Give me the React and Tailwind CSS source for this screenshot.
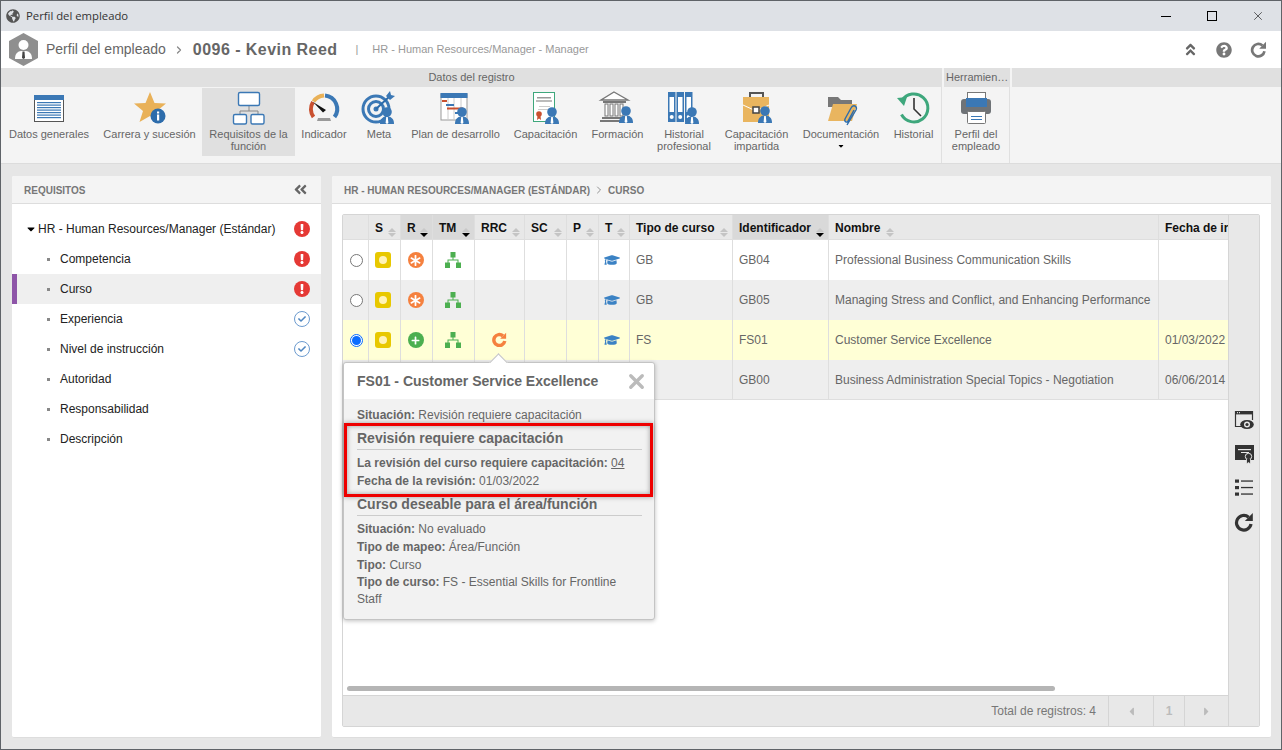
import React from 'react'
import { FaGlobeAmericas, FaQuestionCircle, FaAngleDoubleUp, FaAngleDoubleLeft, FaGraduationCap, FaCaretDown, FaCaretLeft, FaCaretRight, FaExclamation, FaCheck, FaPlus, FaAsterisk } from 'react-icons/fa'
import { ChevronRight, X } from 'lucide-react'

function Person({ x = 0, y = 0 }) {
  return (
    <g transform={`translate(${x} ${y})`}>
      <circle cx="7" cy="5" r="4.8" fill="#3b78b5" />
      <path d="M0 17 C0 11.5 3 10 5.5 9.5 L8.5 9.5 C11 10 14 11.5 14 17 Z" fill="#3b78b5" />
      <path d="M6.2 10 L7.8 10 L8.4 16 L7 17 L5.6 16 Z" fill="#fff" />
    </g>
  )
}

function RedoIcon({ size = 16, weight = 3.2, className = '' }) {
  return (
    <svg width={size} height={size} viewBox="0 0 20 20" fill="none" className={className}>
      <path d="M14.6 5.2 A7.3 7.3 0 1 0 17 12" stroke="currentColor" strokeWidth={weight} />
      <path d="M18.8 1 V9 H10.8 Z" fill="currentColor" />
    </svg>
  )
}

function TreeIcon() {
  return (
    <svg width="16" height="16" viewBox="0 0 16 16" fill="#4caf50">
      <rect x="5.5" y="0" width="5" height="5.5" />
      <rect x="0" y="10.5" width="5" height="5.5" />
      <rect x="11" y="10.5" width="5" height="5.5" />
      <path d="M7.5 5 H8.5 V7.5 H13.5 V11 H12.5 V8.5 H3.5 V11 H2.5 V7.5 H7.5 Z" />
    </svg>
  )
}

function IconDatos() {
  return (
    <svg width="40" height="38" viewBox="0 0 40 38">
      <rect x="5.5" y="5.5" width="29" height="26" fill="#fff" stroke="#555" />
      <rect x="5" y="5" width="30" height="5" fill="#3b78b5" />
      {[12, 14.5, 17, 19.5, 22, 24.5, 27].map(y => <rect key={y} x="8" y={y} width="24" height="1.2" fill="#3b78b5" />)}
    </svg>
  )
}

function IconStar() {
  return (
    <svg width="40" height="38" viewBox="0 0 40 38">
      <path d="M20 2 L24.5 13 L36 13.5 L27 21 L30.5 32 L20 26 L9.5 32 L13 21 L4 13.5 L15.5 13 Z" fill="#e9b158" />
      <circle cx="28" cy="26" r="7.5" fill="#2d6cab" />
      <rect x="27" y="24.5" width="2.2" height="6" fill="#fff" />
      <rect x="27" y="21.5" width="2.2" height="2" fill="#fff" />
    </svg>
  )
}

function IconRequisitos() {
  return (
    <svg width="40" height="38" viewBox="0 0 40 38" fill="none">
      <path d="M20 16 V21 M11 24 V21 H29 V24" stroke="#888" />
      <rect x="9.5" y="2.5" width="21" height="13" rx="1.5" fill="#fff" stroke="#3b78b5" strokeWidth="1.4" />
      <rect x="4.5" y="24.5" width="13" height="9.5" rx="1.5" fill="#fff" stroke="#3b78b5" strokeWidth="1.4" />
      <rect x="22" y="24.5" width="13" height="9.5" rx="1.5" fill="#fff" stroke="#3b78b5" strokeWidth="1.4" />
    </svg>
  )
}

function IconIndicador() {
  return (
    <svg width="40" height="38" viewBox="0 0 40 38" fill="none">
      <path d="M9.5 27 A13.5 13.5 0 0 1 9 12" stroke="#c9502f" strokeWidth="4" />
      <path d="M9.5 11.5 A13.5 13.5 0 0 1 20 5.5" stroke="#e9b158" strokeWidth="4" />
      <path d="M21 5.5 A13.5 13.5 0 0 1 30.5 27" stroke="#3b78b5" strokeWidth="4" />
      <path d="M9 12 L22 20 L19 22.5 Z" fill="#111" />
      <path d="M14 28 H26 L27 31 H13 Z" fill="#999" />
    </svg>
  )
}

function IconMeta() {
  return (
    <svg width="40" height="38" viewBox="0 0 40 38" fill="none">
      <circle cx="17" cy="19" r="13" stroke="#3b78b5" strokeWidth="3" />
      <circle cx="17" cy="19" r="7.5" stroke="#3b78b5" strokeWidth="3" />
      <circle cx="17" cy="19" r="2.5" fill="#3b78b5" />
      <path d="M17 19 L31 6" stroke="#2d6cab" strokeWidth="2" />
      <path d="M27 6 L31 1 L32 5 L36 6 L31 10 Z" fill="#3b78b5" />
      <Person x="21" y="17" />
    </svg>
  )
}

function IconPlan() {
  return (
    <svg width="40" height="38" viewBox="0 0 40 38">
      <rect x="5" y="4" width="26" height="26" fill="#fff" stroke="#999" />
      <rect x="4.5" y="3" width="27" height="5" fill="#3b78b5" />
      <path d="M12 8 V30 M18 8 V30 M25 8 V30" stroke="#ccc" />
      <rect x="6" y="10" width="5" height="2" fill="#c9502f" />
      <rect x="10" y="14" width="8" height="2" fill="#3b78b5" />
      <rect x="11" y="17.5" width="16" height="2" fill="#c9502f" />
      <rect x="19" y="22" width="6" height="2" fill="#3b78b5" />
      <Person x="19" y="17" />
    </svg>
  )
}

function IconCertificado() {
  return (
    <svg width="40" height="38" viewBox="0 0 40 38">
      <rect x="7.5" y="2.5" width="21" height="29" fill="#fff" stroke="#3ea77c" />
      <rect x="11" y="7" width="14" height="1.5" fill="#999" />
      <rect x="10" y="10" width="16" height="2" fill="#bbb" />
      <rect x="13" y="16" width="11" height="1" fill="#ccc" />
      <rect x="12" y="19" width="12" height="1" fill="#ccc" />
      <circle cx="13" cy="24" r="2.8" fill="#c9502f" />
      <path d="M11.5 26 L11 30 L13 28.5 L15 30 L14.5 26 Z" fill="#c9502f" />
      <Person x="19" y="17" />
    </svg>
  )
}

function IconBanco() {
  return (
    <svg width="40" height="38" viewBox="0 0 40 38" fill="none">
      <path d="M16 2 L30 10 H3 Z" stroke="#777" strokeWidth="1.4" fill="#fff" />
      <rect x="5" y="11" width="23" height="2" fill="#777" />
      {[7, 12, 17, 22].map(x => <rect key={x} x={x} y="14" width="3" height="12" fill="#fff" stroke="#777" />)}
      <rect x="4" y="27" width="24" height="2" fill="#777" />
      <rect x="2" y="30" width="27" height="2" fill="#777" />
      <Person x="21" y="16" />
    </svg>
  )
}

function IconCarpetas() {
  return (
    <svg width="40" height="38" viewBox="0 0 40 38">
      {[4, 12.5, 21].map(x => (
        <g key={x}>
          <rect x={x} y="2" width="7.5" height="30" fill="#3b78b5" />
          <rect x={x + 1.5} y="7" width="4.5" height="15" fill="#fff" />
          <circle cx={x + 3.7} cy="27" r="2" fill="#fff" />
        </g>
      ))}
      <Person x="21" y="17" />
    </svg>
  )
}

function IconMaletin() {
  return (
    <svg width="40" height="38" viewBox="0 0 40 38">
      <path d="M13 7 V3 H26 V7" fill="none" stroke="#555" strokeWidth="2" />
      <rect x="6" y="7" width="26" height="25" fill="#e9b55f" />
      <path d="M6 15 L19 21 L32 15" stroke="#fff" strokeWidth="1" fill="none" />
      <rect x="16" y="17" width="6" height="6" fill="#fff" stroke="#444" strokeWidth="1.5" />
      <Person x="21" y="16" />
    </svg>
  )
}

function IconFolder() {
  return (
    <svg width="40" height="38" viewBox="0 0 40 38" fill="none">
      <path d="M7 31 V7 H17 L20 10 H31 V17 H7" fill="#777" />
      <path d="M7 31 L12 14 H36 L31 31 Z" fill="#e9b55f" />
      <path d="M26 35 L35 20 C37 16 32 14 30 18 L24 29 C23 32 26 33 27 31 L33 20" stroke="#2d6cab" strokeWidth="1.4" />
    </svg>
  )
}

function IconHistorial() {
  return (
    <svg width="40" height="38" viewBox="0 0 40 38" fill="none">
      <path d="M8 10.5 A14 14 0 1 1 7.5 24.5" stroke="#3ea77c" strokeWidth="3" />
      <path d="M3 8 L13 7 L10 16 Z" fill="#3ea77c" />
      <path d="M20 8 V19 L27 26" stroke="#333" strokeWidth="1.6" />
    </svg>
  )
}

function IconPrinter() {
  return (
    <svg width="40" height="38" viewBox="0 0 40 38">
      <rect x="11.5" y="2.5" width="18" height="8" fill="#fff" stroke="#777" />
      <rect x="5" y="9" width="30" height="15" rx="3" fill="#6f7377" />
      <rect x="10" y="8" width="21" height="9" fill="#3b78b5" />
      <rect x="11.5" y="21.5" width="18" height="12" rx="1" fill="#fff" stroke="#777" />
      <rect x="15" y="26" width="11" height="1" fill="#3b78b5" />
      <rect x="15" y="29" width="11" height="1" fill="#3b78b5" />
    </svg>
  )
}

const ribbon = [
  { w: 'w-[96px]', lines: ['Datos generales'], icon: IconDatos },
  { w: 'w-[105px]', lines: ['Carrera y sucesión'], icon: IconStar },
  { w: 'w-[93px]', lines: ['Requisitos de la', 'función'], icon: IconRequisitos, active: true },
  { w: 'w-[58px]', lines: ['Indicador'], icon: IconIndicador },
  { w: 'w-[52px]', lines: ['Meta'], icon: IconMeta },
  { w: 'w-[101px]', lines: ['Plan de desarrollo'], icon: IconPlan },
  { w: 'w-[79px]', lines: ['Capacitación'], icon: IconCertificado },
  { w: 'w-[65px]', lines: ['Formación'], icon: IconBanco },
  { w: 'w-[68px]', lines: ['Historial', 'profesional'], icon: IconCarpetas },
  { w: 'w-[77px]', lines: ['Capacitación', 'impartida'], icon: IconMaletin },
  { w: 'w-[92px]', lines: ['Documentación'], icon: IconFolder, caret: true },
  { w: 'w-[53px]', lines: ['Historial'], icon: IconHistorial },
]

function RibbonItem({ item }) {
  const Icon = item.icon
  return (
    <div className={`${item.w} shrink-0 h-[68px] mt-px flex flex-col items-center pt-[2px] text-[11px] leading-[12px] text-[#666] text-center ${item.active ? 'bg-[#e0e0e0]' : ''}`}>
      <div className="h-[38px] flex items-center justify-center"><Icon /></div>
      {item.lines.map(l => <div key={l} className="whitespace-nowrap">{l}</div>)}
      {item.caret && <FaCaretDown size={8} className="text-black mt-[2px]" />}
    </div>
  )
}

const treeItems = [
  { label: 'Competencia', status: 'err' },
  { label: 'Curso', status: 'err', active: true },
  { label: 'Experiencia', status: 'ok' },
  { label: 'Nivel de instrucción', status: 'ok' },
  { label: 'Autoridad' },
  { label: 'Responsabilidad' },
  { label: 'Descripción' },
]

function StatusIcon({ status }) {
  if (status === 'err') return (
    <span className="w-4 h-4 rounded-full bg-[#e53935] flex items-center justify-center text-white"><FaExclamation size={10} /></span>
  )
  if (status === 'ok') return (
    <span className="w-4 h-4 rounded-full border border-[#6c9bcf] flex items-center justify-center text-[#4f86c0]"><FaCheck size={8} /></span>
  )
  return null
}

function Sidebar() {
  return (
    <div className="w-[309px] shrink-0 bg-white rounded-[2px] border-b border-[#ddd] flex flex-col">
      <div className="h-[28px] shrink-0 bg-[#f4f4f4] border-b border-[#ddd] rounded-t-[2px] flex items-center justify-between pl-3 pr-[13px]">
        <span className="text-[10px] font-bold pt-[2px] text-[#777]">REQUISITOS</span>
        <FaAngleDoubleLeft size={15} className="text-[#666]" />
      </div>
      <div className="pt-[10px]">
        <div className="h-[30px] flex items-center pl-[12px] pr-[11px] text-[12px] text-[#222]">
          <FaCaretDown size={12} className="text-black w-[14px] shrink-0" />
          <span className="flex-1">HR - Human Resources/Manager (Estándar)</span>
          <StatusIcon status="err" />
        </div>
        {treeItems.map(t => (
          <div key={t.label} className={`h-[30px] flex items-center pr-[11px] text-[12px] text-[#222] ${t.active ? 'bg-[#efefef] border-l-[5px] border-[#8e55a8] pl-[30px]' : 'pl-[35px]'}`}>
            <span className="w-[3px] h-[3px] bg-[#888] mr-[10px] shrink-0" />
            <span className="flex-1">{t.label}</span>
            <StatusIcon status={t.status} />
          </div>
        ))}
      </div>
    </div>
  )
}

function SortIcon({ active }) {
  return (
    <span className="inline-flex flex-col items-center shrink-0">
      <span className={`w-0 h-0 border-x-[4px] border-x-transparent border-b-[4px] ${active ? 'border-b-[#c8c8c8]' : 'border-b-[#c4c4c4]'}`} />
      <span className={`w-0 h-0 mt-[1px] border-x-[4px] border-x-transparent border-t-[4px] ${active ? 'border-t-black' : 'border-t-[#c4c4c4]'}`} />
    </span>
  )
}

const columns = [
  { label: '', w: 'w-[26px]' },
  { label: 'S', w: 'w-[32px]' },
  { label: 'R', w: 'w-[32px]', active: true },
  { label: 'TM', w: 'w-[42px]', active: true },
  { label: 'RRC', w: 'w-[50px]' },
  { label: 'SC', w: 'w-[42px]' },
  { label: 'P', w: 'w-[32px]' },
  { label: 'T', w: 'w-[31px]' },
  { label: 'Tipo de curso', w: 'w-[103px]' },
  { label: 'Identificador', w: 'w-[96px]', active: true },
  { label: 'Nombre', w: 'w-[330px]', inline: true },
  { label: 'Fecha de inicio', w: 'w-[100px]', last: true },
]

const rows = [
  { tipo: 'GB', id: 'GB04', name: 'Professional Business Communication Skills', date: '', r: 'star', bg: 'bg-white' },
  { tipo: 'GB', id: 'GB05', name: 'Managing Stress and Conflict, and Enhancing Performance', date: '', r: 'star', bg: 'bg-[#eeeeee]' },
  { tipo: 'FS', id: 'FS01', name: 'Customer Service Excellence', date: '01/03/2022', r: 'plus', rrc: true, selected: true, bg: 'bg-[#ffffd6]' },
  { tipo: 'GB', id: 'GB00', name: 'Business Administration Special Topics - Negotiation', date: '06/06/2014', r: 'plus', bg: 'bg-[#eeeeee]', bottom: true },
]

function Cell({ w, children, className = '', last }) {
  return <div className={`${w} shrink-0 h-full flex items-center ${last ? '' : 'border-r border-[#dedede]'} ${className}`}>{children}</div>
}

function Grid() {
  return (
    <div className="flex-1 min-w-0 flex flex-col">
      <div className="flex-1 relative flex flex-col min-h-0">
        <div className="overflow-hidden">
          <div className="flex h-[25px] w-[920px] bg-[#e8e8e8] border-b border-[#dedede]">
            {columns.map(c => (
              <div key={c.label || 'radio'} className={`${c.w} shrink-0 flex items-center pl-[6px] pt-[1px] text-[12px] font-bold text-[#111] whitespace-nowrap overflow-hidden ${c.last ? '' : 'border-r border-[#dedede]'} ${c.active ? 'bg-[#d9d9d9]' : ''}`}>
                {c.label}
                {c.label && !c.last && (c.inline
                  ? <span className="ml-[6px]"><SortIcon active={c.active} /></span>
                  : <span className="ml-auto mr-[4px]"><SortIcon active={c.active} /></span>)}
              </div>
            ))}
          </div>
          {rows.map(r => (
            <div key={r.id} className={`flex h-[40px] w-[920px] text-[12px] text-[#666] ${r.bg} ${r.bottom ? 'border-b border-[#dedede]' : ''}`}>
              <Cell w="w-[26px]" className="justify-center pl-[2px]">
                <span className={`w-[13px] h-[13px] rounded-full border ${r.selected ? 'border-[#0a6cff] flex items-center justify-center bg-white' : 'border-[#777] bg-white'}`}>
                  {r.selected && <span className="w-[9px] h-[9px] rounded-full bg-[#0a6cff]" />}
                </span>
              </Cell>
              <Cell w="w-[32px]" className="justify-center pr-[3px]">
                <span className="w-4 h-4 rounded-[3px] bg-[#e8c800] flex items-center justify-center"><span className="w-[8px] h-[8px] rounded-full bg-[#fff3b8]" /></span>
              </Cell>
              <Cell w="w-[32px]" className="justify-center pr-[2px]">
                {r.r === 'star'
                  ? <span className="w-4 h-4 rounded-full bg-[#f5813f] flex items-center justify-center text-white"><FaAsterisk size={11} /></span>
                  : <span className="w-4 h-4 rounded-full bg-[#4caf50] flex items-center justify-center text-white"><FaPlus size={9} /></span>}
              </Cell>
              <Cell w="w-[42px]" className="justify-center pr-[2px]"><TreeIcon /></Cell>
              <Cell w="w-[50px]" className="justify-center pb-[1px] text-[#f5813f]">{r.rrc && <RedoIcon size={15} weight={4.6} />}</Cell>
              <Cell w="w-[42px]" />
              <Cell w="w-[32px]" />
              <Cell w="w-[31px]" className="justify-center pr-[4px] text-[#3b82c4]"><FaGraduationCap size={16} /></Cell>
              <Cell w="w-[103px]" className="pl-[6px]">{r.tipo}</Cell>
              <Cell w="w-[96px]" className="pl-[6px]">{r.id}</Cell>
              <Cell w="w-[330px]" className="pl-[6px] whitespace-nowrap">{r.name}</Cell>
              <Cell w="w-[100px]" className="pl-[6px]" last>{r.date}</Cell>
            </div>
          ))}
        </div>
        <div className="mt-auto mb-[4px] ml-[4px] w-[708px] h-[5px] rounded-full bg-[#b5b5b5]" />
        <Popover />
      </div>
      <div className="h-[31px] shrink-0 bg-[#e8e8e8] border-t border-[#d5d5d5] flex justify-end text-[12px] text-[#777]">
        <div className="flex items-center pr-3">Total de registros: 4</div>
        <div className="w-[45px] border-l border-[#d5d5d5] flex items-center justify-center text-[#bbb]"><FaCaretLeft size={13} /></div>
        <div className="w-[31px] border-l border-[#d5d5d5] flex items-center justify-center text-[#bbb] font-bold">1</div>
        <div className="w-[44px] border-l border-[#d5d5d5] flex items-center justify-center text-[#bbb]"><FaCaretRight size={13} /></div>
      </div>
    </div>
  )
}

function Bold({ children }) {
  return <span className="font-bold">{children}</span>
}

function Popover() {
  return (
    <div className="absolute left-0 top-[147px] w-[312px] h-[258px] bg-[#f2f2f2] border border-[#c4c4c4] rounded-[3px] shadow-[0_1px_4px_rgba(0,0,0,0.25)] text-[12px] leading-[18px] text-[#666] z-10">
      <div className="absolute -top-[7px] left-[148px] w-[13px] h-[13px] rotate-45 bg-white border-l border-t border-[#c4c4c4]" />
      <div className="relative h-[36px] bg-white rounded-t-[3px] flex items-center justify-between pl-[13px] pr-[6px]">
        <span className="text-[14px] font-bold text-[#666]">FS01 - Customer Service Excellence</span>
        <X size={23} strokeWidth={3.5} className="text-[#bbb]" />
      </div>
      <div className="pl-[13px] pr-[12px] pt-[7px]">
        <div className="h-[18px]"><Bold>Situación:</Bold> Revisión requiere capacitación</div>
        <div className="mt-[5px] pb-[2px] border-b border-[#ccc] text-[14px] leading-[18px] font-bold">Revisión requiere capacitación</div>
        <div className="mt-[5px] leading-[17px]"><Bold>La revisión del curso requiere capacitación:</Bold> <span className="underline">04</span></div>
        <div><Bold>Fecha de la revisión:</Bold> 01/03/2022</div>
        <div className="mt-[5px] pb-[2px] border-b border-[#ccc] text-[14px] leading-[18px] font-bold">Curso deseable para el área/función</div>
        <div className="mt-[4px]"><Bold>Situación:</Bold> No evaluado</div>
        <div><Bold>Tipo de mapeo:</Bold> Área/Función</div>
        <div><Bold>Tipo:</Bold> Curso</div>
        <div className="leading-[17px]"><Bold>Tipo de curso:</Bold> FS - Essential Skills for Frontline Staff</div>
      </div>
      <div className="absolute left-0 top-[60px] w-[309px] h-[74px] border-[3px] border-[#ee0000] shadow-[0_0_5px_rgba(0,0,0,0.35),inset_0_0_5px_rgba(0,0,0,0.35)]" />
    </div>
  )
}

function SideToolbar() {
  return (
    <div className="w-[31px] shrink-0 bg-[#e8e8e8] border-l border-[#d5d5d5] flex flex-col items-center pt-[195px] gap-[14px] text-[#333]">
      <svg width="20" height="20" viewBox="0 0 20 20" className="shrink-0">
        <path d="M8 16.5 H1.5 V1.5 H18.5 V10" fill="none" stroke="#333" strokeWidth="1.2" />
        <rect x="1" y="1" width="18" height="3.4" fill="#333" />
        <rect x="3" y="2.2" width="1" height="1" fill="#fff" />
        <rect x="5" y="2.2" width="1" height="1" fill="#fff" />
        <ellipse cx="13" cy="14.5" rx="6.8" ry="4.6" fill="#333" />
        <circle cx="13" cy="14.5" r="3" fill="#e8e8e8" />
        <circle cx="13" cy="14.5" r="1.6" fill="#333" />
      </svg>
      <svg width="20" height="20" viewBox="0 0 20 20" className="shrink-0">
        <rect x="1" y="1" width="19" height="15" fill="#333" />
        <rect x="4" y="5" width="13" height="1.2" fill="#e8e8e8" />
        <rect x="7" y="8" width="8" height="1" fill="#e8e8e8" />
        <circle cx="14.5" cy="12.5" r="3.2" fill="#333" stroke="#e8e8e8" />
        <path d="M12.5 15 V20 L14.5 18.5 L16.5 20 V15" fill="#333" stroke="#e8e8e8" strokeWidth="0.8" />
      </svg>
      <svg width="20" height="20" viewBox="0 0 20 20" className="shrink-0">
        {[3, 9.5, 16].map(y => (
          <g key={y}>
            <rect x="1" y={y - 1.5} width="4" height="3.2" fill="#333" />
            <rect x="7" y={y - 0.6} width="12" height="1.3" fill="#333" />
          </g>
        ))}
      </svg>
      <RedoIcon size={20} className="shrink-0 text-[#333]" />
    </div>
  )
}

export default function App() {
  return (
    <div className="w-[1282px] h-[750px] border border-[#5f6368] bg-[#e6e6e6] flex flex-col overflow-hidden font-['Liberation_Sans',Arial,sans-serif]">
      {/* title bar */}
      <div className="h-[30px] shrink-0 bg-[#dee1e6] flex items-center pl-[5px] text-[11.3px] text-[#333] font-['Open_Sans',sans-serif]">
        <FaGlobeAmericas size={14} className="text-[#555] mr-[6px]" />
        <span className="flex-1">Perfil del empleado</span>
        <div className="flex items-center h-full">
          <div className="w-[46px] flex justify-center"><span className="w-[10px] h-px bg-black" /></div>
          <div className="w-[46px] flex justify-center"><span className="w-[10px] h-[10px] border border-black" /></div>
          <div className="w-[46px] flex justify-center"><X size={14} strokeWidth={1} className="text-black" /></div>
        </div>
      </div>

      {/* header */}
      <div className="h-[37px] shrink-0 bg-white flex items-center pl-[7px] pr-[14px] text-[#666]">
        <svg width="31" height="33" viewBox="0 0 31 33" className="mr-[7px] shrink-0">
          <path d="M15.5 0 L30 8 V25 L15.5 33 L1 25 V8 Z" fill="#8f8f8f" />
          <circle cx="15.5" cy="12" r="5" fill="#fff" />
          <path d="M7 26 C7 20 10 18.5 13 18 H18 C21 18.5 24 20 24 26 Z" fill="#fff" />
          <path d="M14.5 18.5 H16.5 L17 25 L15.5 26 L14 25 Z" fill="#444" />
        </svg>
        <span className="text-[14px]">Perfil del empleado</span>
        <ChevronRight size={12} strokeWidth={2.5} className="mx-[7px] text-[#888]" />
        <span className="text-[16px] font-bold tracking-[0.45px] ml-[1px]">0096 - Kevin Reed</span>
        <span className="text-[11px] text-[#999] ml-[18px]">|</span>
        <span className="text-[11px] text-[#999] ml-[14px] flex-1">HR - Human Resources/Manager - Manager</span>
        <FaAngleDoubleUp size={15} className="text-[#666] mr-[18px]" />
        <FaQuestionCircle size={16} className="text-[#777] mr-[18px]" />
        <RedoIcon size={17} className="text-[#777]" />
      </div>

      {/* ribbon */}
      <div className="h-[96px] shrink-0 flex flex-col bg-[#f4f4f4] border-b border-[#dcdcdc]">
        <div className="h-[19px] shrink-0 flex text-[11px] text-[#666] leading-[19px]">
          <div className="w-[941px] bg-[#e0e0e0] text-center">Datos del registro</div>
          <div className="w-[66px] ml-[2px] bg-[#e0e0e0] pl-[2px] whitespace-nowrap">Herramien…</div>
          <div className="flex-1 ml-[2px] bg-[#e0e0e0]" />
        </div>
        <div className="flex flex-1">
          <div className="w-[941px] shrink-0 flex border-r border-[#e0e0e0]">
            {ribbon.map(item => <RibbonItem key={item.lines[0] + item.w} item={item} />)}
          </div>
          <div className="w-[67px] shrink-0 ml-[1px] border-r border-[#e0e0e0]">
            <RibbonItem item={{ w: 'w-[66px]', lines: ['Perfil del', 'empleado'], icon: IconPrinter }} />
          </div>
        </div>
      </div>

      {/* content */}
      <div className="flex-1 min-h-0 flex gap-[11px] pl-[11px] pr-[10px] pt-[12px] pb-[11px]">
        <Sidebar />
        <div className="flex-1 min-w-0 bg-white rounded-[2px] border-b border-[#ddd] flex flex-col">
          <div className="h-[28px] shrink-0 bg-[#f4f4f4] border-b border-[#ddd] rounded-t-[2px] flex items-center pl-3 text-[10px] font-bold text-[#777]">
            <span className="pt-[2px]">HR - HUMAN RESOURCES/MANAGER (ESTÁNDAR)</span>
            <ChevronRight size={12} strokeWidth={1.6} className="mx-[3px] mt-[1px] text-[#777]" />
            <span className="pt-[2px]">CURSO</span>
          </div>
          <div className="flex-1 min-h-0 pl-[10px] pr-[11px] pt-[10px] pb-[10px]">
            <div className="h-full flex border border-[#d5d5d5] rounded-[2px]">
              <Grid />
              <SideToolbar />
            </div>
          </div>
        </div>
      </div>
    </div>
  )
}
